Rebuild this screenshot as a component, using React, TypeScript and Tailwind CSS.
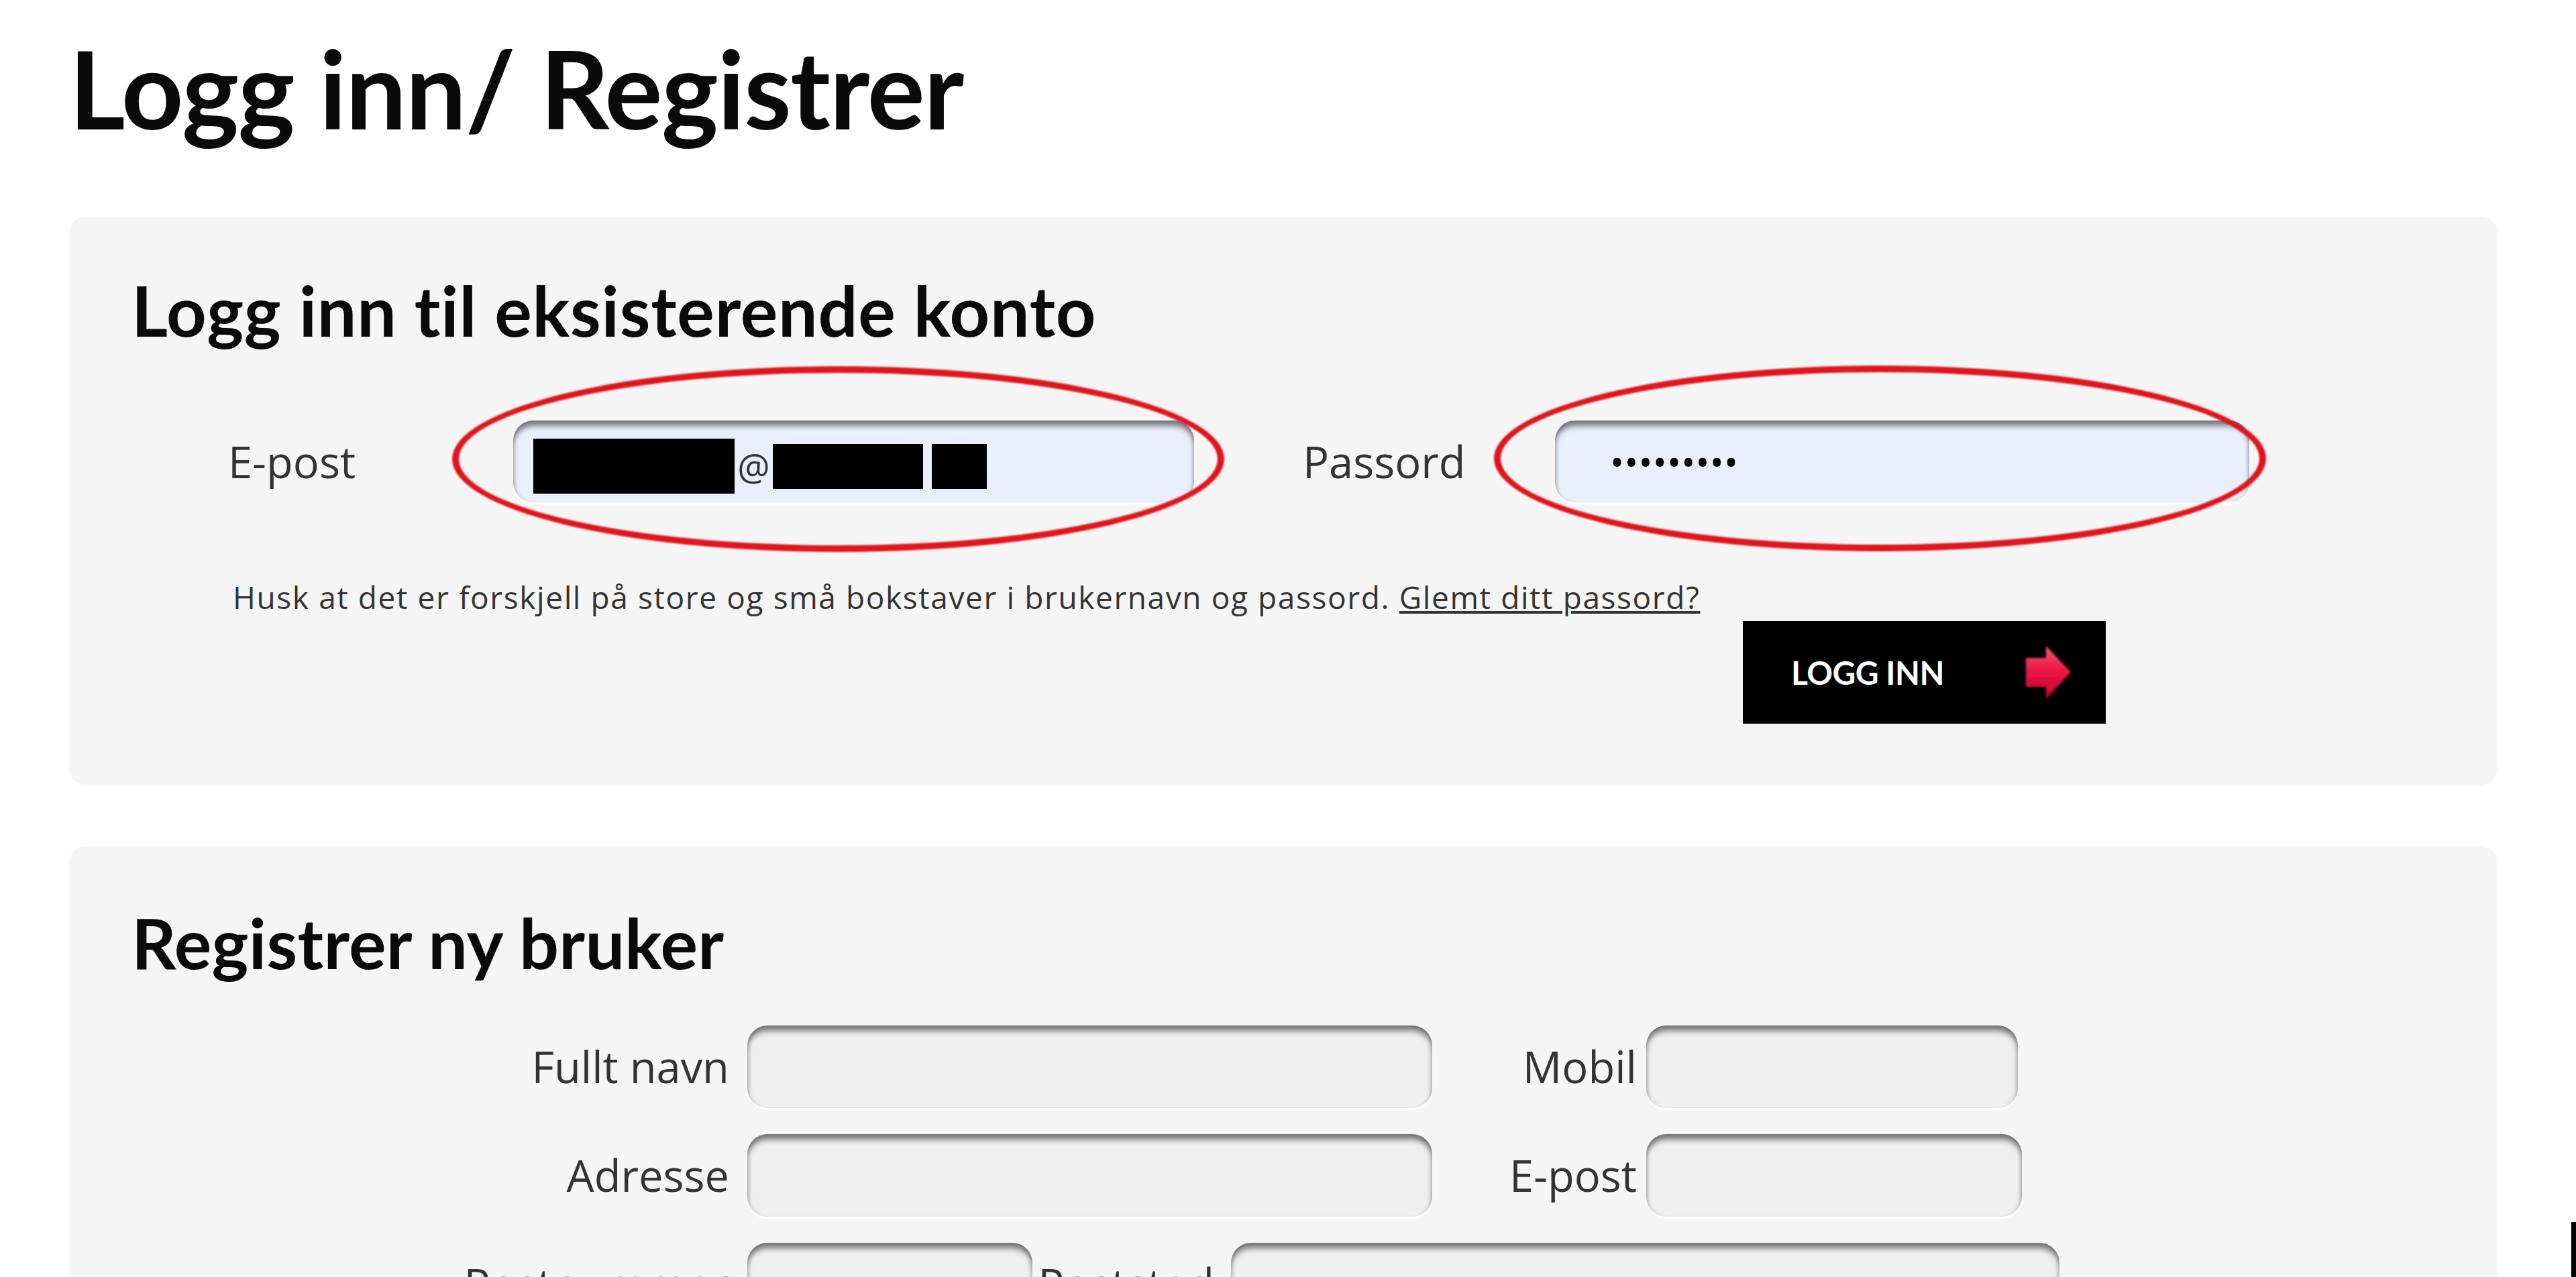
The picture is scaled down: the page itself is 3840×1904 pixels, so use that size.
import clsx from "clsx";
import type { ReactNode } from "react";

const heading = "font-['Lato',sans-serif] font-bold leading-none text-[#0a0a0a]";
const body = "font-['Open_Sans',sans-serif]";

const fieldShadow =
  "shadow-[inset_0_10px_8px_-2px_rgba(0,0,0,0.5),inset_5px_0_6px_-4px_rgba(0,0,0,0.2),inset_-5px_0_6px_-4px_rgba(0,0,0,0.2),0_3px_3px_rgba(255,255,255,0.9)]";

const Label = ({ children, className }: { children: ReactNode; className?: string }) => (
  <span className={clsx("shrink-0 text-[65px] leading-none text-[#333]", body, className)}>
    {children}
  </span>
);

const Field = ({ className }: { className?: string }) => (
  <div className={clsx("h-[123px] shrink-0 rounded-[30px] bg-[#efefef]", fieldShadow, className)} />
);

const Ring = ({ className }: { className?: string }) => (
  <div
    className={clsx(
      "pointer-events-none absolute h-[277px] w-[1151px] rounded-[50%] border-[10px] border-[#e0151d] blur-[1.2px]",
      className
    )}
  />
);

const Arrow = () => (
  <svg width="80" height="84" viewBox="0 0 80 84" className="mr-[48px] ml-auto">
    <defs>
      <linearGradient id="arrowFill" x1="0" y1="0" x2="0" y2="1">
        <stop offset="0" stopColor="#f4587a" />
        <stop offset="0.45" stopColor="#ec1744" />
        <stop offset="1" stopColor="#c8002c" />
      </linearGradient>
      <filter id="soft">
        <feGaussianBlur stdDeviation="1.6" />
      </filter>
    </defs>
    <path d="M9 20 H39 V2 L76 41 L39 81 V63 H9 Z" fill="url(#arrowFill)" filter="url(#soft)" />
  </svg>
);

export default function App() {
  return (
    <div className="relative h-[1904px] w-[3840px] overflow-hidden bg-white pl-[103px] pt-[50px]">
      <h1 className={clsx(heading, "text-[161px] tracking-[-1.5px]")}>Logg inn/ Registrer</h1>

      {/* eksisterende konto */}
      <section className="mt-[112px] w-[3620px] rounded-[24px] bg-[#f5f5f5] pb-[91px] pl-[93px] pt-[87px]">
        <h2 className={clsx(heading, "text-[104px] tracking-[0.8px]")}>Logg inn til eksisterende konto</h2>

        <div className="ml-[144px] mt-[113px] flex items-center">
          <Label className="w-[425px]">E-post</Label>
          <div className={clsx("relative h-[122px] w-[1015px] shrink-0 rounded-[30px] bg-[#e9f0fb]", fieldShadow)}>
            <div className="flex h-full items-center pl-[30px] pt-[14px]">
              <span className="h-[82px] w-[300px] bg-black" />
              <span className={clsx("w-[57px] text-center text-[54px] leading-none text-[#333]", body)}>@</span>
              <span className="h-[67px] w-[224px] bg-black" />
              <span className="ml-[13px] h-[67px] w-[82px] bg-black" />
            </div>
            <Ring className="left-[-91px] top-[-81px]" />
          </div>

          <Label className="ml-[162px] w-[376px]">Passord</Label>
          <div className={clsx("relative h-[122px] w-[1035px] shrink-0 rounded-[30px] bg-[#e9f0fb]", fieldShadow)}>
            <div className={clsx("flex h-full items-center pl-[82px] text-[56px] tracking-[0.2px] text-black", body)}>
              •••••••••
            </div>
            <Ring className="left-[-91px] top-[-82px] h-[275px]" />
          </div>
        </div>

        <p className={clsx("ml-[151px] mt-[118px] text-[46px] leading-none tracking-[1.6px] text-[#333]", body)}>
          Husk at det er forskjell på store og små bokstaver i brukernavn og passord.{" "}
          <a href="#" className="underline">
            Glemt ditt passord?
          </a>
        </p>

        <button className="ml-[2402px] mt-[13px] flex h-[153px] w-[541px] items-center bg-black pl-[72px]">
          <span className="font-['Lato',sans-serif] text-[48px] font-bold leading-none tracking-[-0.5px] text-white">
            LOGG INN
          </span>
          <Arrow />
        </button>
      </section>

      {/* ny bruker */}
      <section className="mt-[92px] w-[3620px] rounded-[24px] bg-[#f5f5f5] pb-[91px] pl-[93px] pt-[91px]">
        <h2 className={clsx(heading, "text-[104px] tracking-[0.3px]")}>Registrer ny bruker</h2>

        <div className="mt-[72px] flex flex-col gap-[39px]">
          <div className="flex items-center">
            <Label className="w-[891px] text-right">Fullt navn</Label>
            <Field className="ml-[27px] w-[1021px]" />
            <Label className="w-[305px] text-right">Mobil</Label>
            <Field className="ml-[14px] w-[554px]" />
          </div>
          <div className="flex items-center">
            <Label className="w-[891px] text-right">Adresse</Label>
            <Field className="ml-[27px] w-[1021px]" />
            <Label className="w-[305px] text-right">E-post</Label>
            <Field className="ml-[14px] w-[560px]" />
          </div>
          <div className="flex items-center">
            <Label className="w-[891px] text-right">Postnummer</Label>
            <Field className="ml-[27px] w-[425px]" />
            <Label className="w-[271px] text-right">Poststed</Label>
            <Field className="ml-[25px] w-[1235px]" />
          </div>
        </div>
      </section>

      <div className="absolute right-0 top-[1822px] h-[82px] w-[7px] bg-black" />
    </div>
  );
}
